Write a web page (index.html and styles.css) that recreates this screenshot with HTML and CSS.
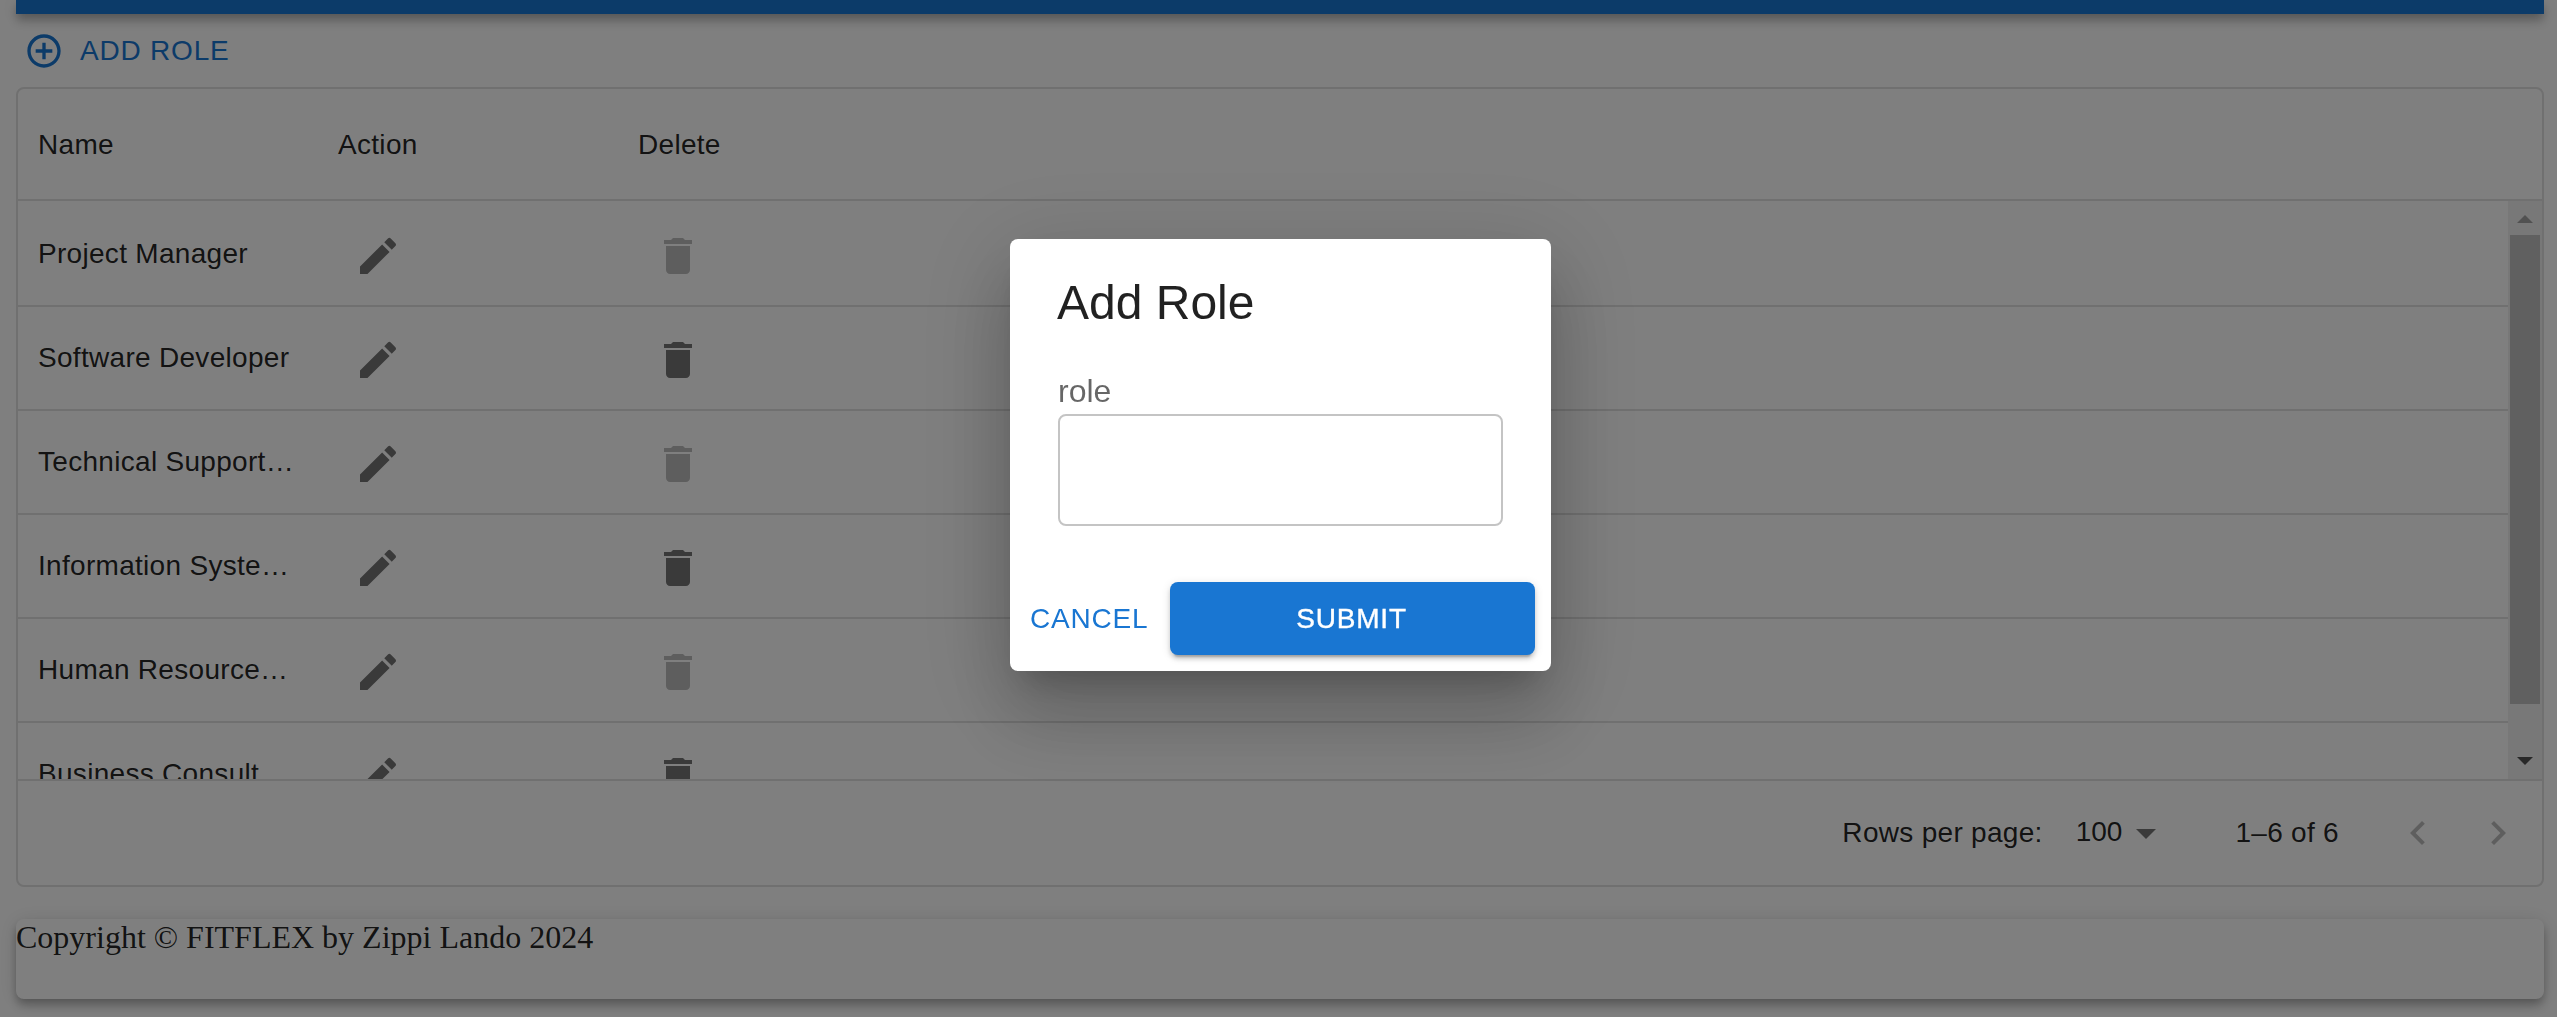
FILE: index.html
```
<!DOCTYPE html>
<html lang="en">
<head>
<meta charset="utf-8">
<title>Roles</title>
<link rel="stylesheet" href="styles.css">
</head>
<body>
<svg class="sprite" aria-hidden="true">
  <symbol id="edit" viewBox="0 0 24 24"><path d="M3 17.25V21h3.75L17.81 9.94l-3.75-3.75L3 17.25zM20.71 7.04c.39-.39.39-1.02 0-1.41l-2.34-2.34a.9959.9959 0 0 0-1.41 0l-1.83 1.83 3.75 3.75 1.83-1.83z"/></symbol>
  <symbol id="trash" viewBox="0 0 24 24"><path d="M6 19c0 1.1.9 2 2 2h8c1.1 0 2-.9 2-2V7H6v12zM19 4h-3.5l-1-1h-5l-1 1H5v2h14V4z"/></symbol>
</svg>
<div class="page">
  <header class="app-bar"></header>
  <div class="toolbar">
    <button class="add-button">
      <svg class="add-icon" viewBox="0 0 24 24"><path d="M13 7h-2v4H7v2h4v4h2v-4h4v-2h-4V7zm-1-5C6.48 2 2 6.48 2 12s4.48 10 10 10 10-4.48 10-10S17.52 2 12 2zm0 18c-4.41 0-8-3.59-8-8s3.59-8 8-8 8 3.59 8 8-3.59 8-8 8z"/></svg>
      Add role
    </button>
  </div>
  <main class="grid">
    <div class="grid-head">
      <div class="cell">Name</div><div class="cell">Action</div><div class="cell">Delete</div>
    </div>
    <div class="grid-body">
      <div class="rows">
        <div class="row"><div class="cell">Project Manager</div><div class="cell icon-cell"><svg class="icon"><use href="#edit"/></svg></div><div class="cell icon-cell"><svg class="icon disabled"><use href="#trash"/></svg></div></div>
        <div class="row"><div class="cell">Software Developer</div><div class="cell icon-cell"><svg class="icon"><use href="#edit"/></svg></div><div class="cell icon-cell"><svg class="icon"><use href="#trash"/></svg></div></div>
        <div class="row"><div class="cell">Technical Support…</div><div class="cell icon-cell"><svg class="icon"><use href="#edit"/></svg></div><div class="cell icon-cell"><svg class="icon disabled"><use href="#trash"/></svg></div></div>
        <div class="row"><div class="cell">Information Syste…</div><div class="cell icon-cell"><svg class="icon"><use href="#edit"/></svg></div><div class="cell icon-cell"><svg class="icon"><use href="#trash"/></svg></div></div>
        <div class="row"><div class="cell">Human Resource…</div><div class="cell icon-cell"><svg class="icon"><use href="#edit"/></svg></div><div class="cell icon-cell"><svg class="icon disabled"><use href="#trash"/></svg></div></div>
        <div class="row"><div class="cell">Business Consult…</div><div class="cell icon-cell"><svg class="icon"><use href="#edit"/></svg></div><div class="cell icon-cell"><svg class="icon"><use href="#trash"/></svg></div></div>
      </div>
      <div class="scrollbar">
        <svg class="scroll-arrow up" viewBox="0 0 34 34"><path d="M9 22h16l-8-8z"/></svg>
        <div class="thumb"></div>
        <svg class="scroll-arrow down" viewBox="0 0 34 34"><path d="M9 12h16l-8 8z"/></svg>
      </div>
    </div>
    <div class="pagination">
      <span class="rows-label">Rows per page:</span>
      <span class="page-size">100</span>
      <svg class="icon select-arrow" viewBox="0 0 24 24"><path d="m7 10 5 5 5-5z"/></svg>
      <span class="range">1–6 of 6</span>
      <svg class="icon disabled" viewBox="0 0 24 24"><path d="M15.41 16.59 10.83 12l4.58-4.59L14 6l-6 6 6 6 1.41-1.41z"/></svg>
      <svg class="icon disabled next" viewBox="0 0 24 24"><path d="M8.59 16.59 13.17 12 8.59 7.41 10 6l6 6-6 6-1.41-1.41z"/></svg>
    </div>
  </main>
  <footer class="footer">Copyright © FITFLEX by Zippi Lando 2024</footer>
</div>
<div class="backdrop">
  <form class="dialog">
    <h2 class="dialog-title">Add Role</h2>
    <label class="label" for="role">role</label>
    <input class="input" id="role" type="text">
    <div class="actions">
      <button class="cancel" type="button">Cancel</button>
      <button class="submit" type="button">Submit</button>
    </div>
  </form>
</div>
</body>
</html>
```
FILE: styles.css
```
* { box-sizing: border-box; }
body {
  margin: 0;
  height: 1017px;
  overflow: hidden;
  background: #fff;
  color: rgba(0, 0, 0, .87);
  font: 28px/40px "Liberation Sans", Arial, sans-serif;
}
.sprite { display: none; }
button { border: 0; margin: 0; font: inherit; letter-spacing: .8px; text-transform: uppercase; }
.page { padding: 0 13px 0 16px; }
.app-bar {
  height: 14px;
  background: #1976d2;
  box-shadow: 0 4px 8px -2px rgba(0,0,0,.2), 0 8px 10px rgba(0,0,0,.14), 0 2px 20px rgba(0,0,0,.12);
}
.toolbar { height: 73px; display: flex; padding: 13px 0 0 8px; }
.add-button {
  height: 48px;
  padding: 0;
  display: flex;
  align-items: center;
  gap: 16px;
  background: none;
  color: #1976d2;
}
.add-icon { width: 40px; height: 40px; fill: #1976d2; }

.grid {
  height: 800px;
  display: flex;
  flex-direction: column;
  border: 2px solid #e0e0e0;
  border-radius: 8px;
  letter-spacing: .3px;
}
.grid-head, .row { display: flex; align-items: center; border-bottom: 2px solid #e0e0e0; }
.grid-head { height: 112px; flex: none; padding-top: 2px; }
.cell { width: 300px; padding: 0 20px; white-space: nowrap; overflow: hidden; }
.grid-body { height: 578px; display: flex; overflow: hidden; }
.rows { flex: 1; }
.row { height: 104px; }
.row:first-child { height: 106px; padding-top: 2px; }
.icon-cell { display: flex; padding: 4px 36px 0; }
.icon { width: 48px; height: 48px; flex: none; fill: rgba(0, 0, 0, .54); }
.icon.disabled { fill: rgba(0, 0, 0, .26); }

.scrollbar { width: 34px; display: flex; flex-direction: column; align-items: center; background: #f1f1f1; }
.scroll-arrow { width: 34px; height: 34px; }
.up { fill: #a3a3a3; }
.down { fill: #505050; margin-top: auto; }
.thumb { width: 30px; height: 469px; background: #c1c1c1; }

.pagination {
  height: 106px;
  display: flex;
  align-items: center;
  border-top: 2px solid #e0e0e0;
  justify-content: flex-end;
  padding-right: 20px;
}
.rows-label { margin-right: 33px; }
.page-size { padding-bottom: 2px; letter-spacing: 0; }
.select-arrow { margin-right: 65px; }
.range { margin-right: 55px; }
.next { margin-left: 32px; }

.footer {
  height: 80px;
  margin-top: 32px;
  border-radius: 8px;
  background: #fff;
  font: 32px/37px "Liberation Serif", "Times New Roman", serif;
  box-shadow: 0 4px 8px -2px rgba(0,0,0,.2), 0 8px 10px rgba(0,0,0,.14), 0 2px 20px rgba(0,0,0,.12);
}

.backdrop {
  position: fixed;
  inset: 0;
  display: flex;
  align-items: flex-start;
  justify-content: center;
  padding: 239px 0 0 4px;
  background: rgba(0, 0, 0, .5);
}
.dialog {
  width: 541px;
  height: 432px;
  display: flex;
  flex-direction: column;
  padding: 32px 16px 16px;
  border-radius: 8px;
  background: #fff;
  box-shadow: 0 22px 30px -14px rgba(0,0,0,.2), 0 48px 76px 6px rgba(0,0,0,.14), 0 18px 92px 16px rgba(0,0,0,.12);
}
.dialog-title { margin: 0 32px 0 31px; font-size: 48px; line-height: 64px; font-weight: 400; }
.label { margin: 33px 32px 0; font-size: 32px; line-height: 46px; letter-spacing: 0; color: rgba(0, 0, 0, .6); }
.input { margin: 0 32px; width: 445px; height: 112px; border: 2px solid #c4c4c4; border-radius: 8px; outline: 0; background: #fff; }
.actions { display: flex; margin-top: auto; height: 73px; }
.cancel { width: 144px; padding: 0 0 0 4px; text-align: left; background: none; color: #1976d2; }
.submit {
  width: 365px;
  padding: 0 2px 0 0;
  border-radius: 8px;
  background: #1976d2;
  color: #fff;
  -webkit-text-stroke: .4px #fff;
  box-shadow: 0 6px 2px -4px rgba(0,0,0,.2), 0 4px 4px rgba(0,0,0,.14), 0 2px 10px rgba(0,0,0,.12);
}
```
